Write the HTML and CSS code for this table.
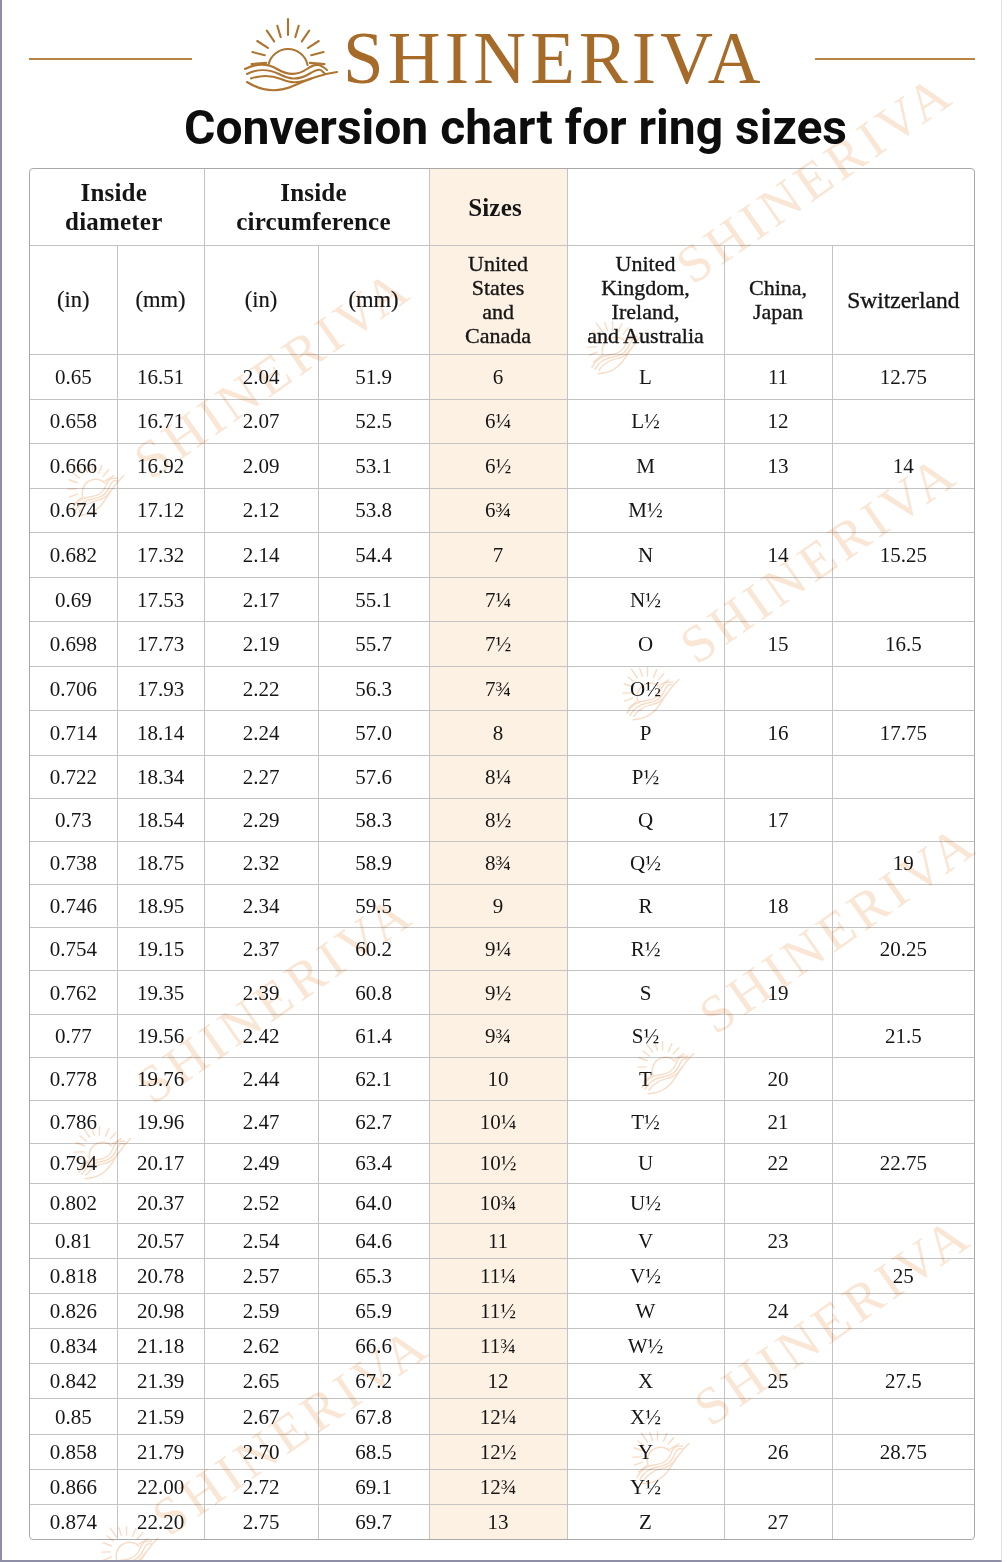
FILE: index.html
```html
<!DOCTYPE html>
<html lang="en">
<head>
<meta charset="utf-8">
<title>Shineriva – Conversion chart for ring sizes</title>
<link rel="stylesheet" href="styles.css">
</head>
<body>
<svg class="defs" width="0" height="0" aria-hidden="true">
  <symbol id="sun" viewBox="0 0 110 82">
    <g fill="none" stroke="currentColor" stroke-width="2.1" stroke-linecap="round" stroke-linejoin="round">
      <path d="M33.4 53 A20 20 0 0 1 72.6 53"/>
      <path d="M53 23 L53 7"/>
      <path d="M45.7 25.1 L42.3 13.8 M60.3 25.1 L63.7 13.8"/>
      <path d="M39.2 29.3 L31.8 18.7 M66.8 29.3 L74.2 18.7"/>
      <path d="M32.9 35.9 L22.2 29 M73.1 35.9 L83.8 29"/>
      <path d="M29.7 43.2 L17.4 40.1 M76.3 43.2 L88.6 40.1"/>
      <path d="M31.1 50.9 L16.6 52.1 M74.9 50.9 L89.4 52.1"/>
      <path d="M10 57 C20 52 32 51 42 57 S62 64 72 57 S86 53 92 58"/>
      <path d="M12 62 C22 57 34 57 44 62 S62 69 74 62 S86 58 90 62"/>
      <path d="M16 66.5 C26 63 36 63 46 67 S62 72 76 66.5"/>
      <path d="M12 70 C28 80 44 80 58 74 S86 62 102 60"/>
    </g>
  </symbol>
</svg>

<div class="page">
  <header class="brand">
    <span class="rule"></span>
    <div class="logo">
      <svg class="logo-icon" viewBox="0 0 110 82"><use href="#sun"/></svg>
      <span class="logo-text">SHINERIVA</span>
    </div>
    <span class="rule rule-right"></span>
  </header>

  <h1 class="title">Conversion chart for ring sizes</h1>

  <div class="chart">
    <table>
      <colgroup>
        <col class="c1"><col class="c2"><col class="c3"><col class="c4">
        <col class="c5"><col class="c6"><col class="c7"><col class="c8">
      </colgroup>
      <thead>
        <tr class="hr1">
          <th colspan="2">Inside<br>diameter</th>
          <th colspan="2">Inside<br>circumference</th>
          <th class="hl">Sizes</th>
          <th colspan="3"></th>
        </tr>
        <tr class="hr2">
          <th class="unit">(in)</th>
          <th class="unit">(mm)</th>
          <th class="unit">(in)</th>
          <th class="unit">(mm)</th>
          <th class="hl">United<br>States<br>and<br>Canada</th>
          <th>United<br>Kingdom,<br>Ireland,<br>and Australia</th>
          <th>China,<br>Japan</th>
          <th class="swiss">Switzerland</th>
        </tr>
      </thead>
      <tbody>
        <tr><td>0.65</td><td>16.51</td><td>2.04</td><td>51.9</td><td>6</td><td>L</td><td>11</td><td>12.75</td></tr>
        <tr><td>0.658</td><td>16.71</td><td>2.07</td><td>52.5</td><td>6¼</td><td>L½</td><td>12</td><td></td></tr>
        <tr><td>0.666</td><td>16.92</td><td>2.09</td><td>53.1</td><td>6½</td><td>M</td><td>13</td><td>14</td></tr>
        <tr><td>0.674</td><td>17.12</td><td>2.12</td><td>53.8</td><td>6¾</td><td>M½</td><td></td><td></td></tr>
        <tr><td>0.682</td><td>17.32</td><td>2.14</td><td>54.4</td><td>7</td><td>N</td><td>14</td><td>15.25</td></tr>
        <tr><td>0.69</td><td>17.53</td><td>2.17</td><td>55.1</td><td>7¼</td><td>N½</td><td></td><td></td></tr>
        <tr><td>0.698</td><td>17.73</td><td>2.19</td><td>55.7</td><td>7½</td><td>O</td><td>15</td><td>16.5</td></tr>
        <tr><td>0.706</td><td>17.93</td><td>2.22</td><td>56.3</td><td>7¾</td><td>O½</td><td></td><td></td></tr>
        <tr><td>0.714</td><td>18.14</td><td>2.24</td><td>57.0</td><td>8</td><td>P</td><td>16</td><td>17.75</td></tr>
        <tr><td>0.722</td><td>18.34</td><td>2.27</td><td>57.6</td><td>8¼</td><td>P½</td><td></td><td></td></tr>
        <tr><td>0.73</td><td>18.54</td><td>2.29</td><td>58.3</td><td>8½</td><td>Q</td><td>17</td><td></td></tr>
        <tr><td>0.738</td><td>18.75</td><td>2.32</td><td>58.9</td><td>8¾</td><td>Q½</td><td></td><td>19</td></tr>
        <tr><td>0.746</td><td>18.95</td><td>2.34</td><td>59.5</td><td>9</td><td>R</td><td>18</td><td></td></tr>
        <tr><td>0.754</td><td>19.15</td><td>2.37</td><td>60.2</td><td>9¼</td><td>R½</td><td></td><td>20.25</td></tr>
        <tr><td>0.762</td><td>19.35</td><td>2.39</td><td>60.8</td><td>9½</td><td>S</td><td>19</td><td></td></tr>
        <tr><td>0.77</td><td>19.56</td><td>2.42</td><td>61.4</td><td>9¾</td><td>S½</td><td></td><td>21.5</td></tr>
        <tr><td>0.778</td><td>19.76</td><td>2.44</td><td>62.1</td><td>10</td><td>T</td><td>20</td><td></td></tr>
        <tr><td>0.786</td><td>19.96</td><td>2.47</td><td>62.7</td><td>10¼</td><td>T½</td><td>21</td><td></td></tr>
        <tr><td>0.794</td><td>20.17</td><td>2.49</td><td>63.4</td><td>10½</td><td>U</td><td>22</td><td>22.75</td></tr>
        <tr><td>0.802</td><td>20.37</td><td>2.52</td><td>64.0</td><td>10¾</td><td>U½</td><td></td><td></td></tr>
        <tr><td>0.81</td><td>20.57</td><td>2.54</td><td>64.6</td><td>11</td><td>V</td><td>23</td><td></td></tr>
        <tr><td>0.818</td><td>20.78</td><td>2.57</td><td>65.3</td><td>11¼</td><td>V½</td><td></td><td>25</td></tr>
        <tr><td>0.826</td><td>20.98</td><td>2.59</td><td>65.9</td><td>11½</td><td>W</td><td>24</td><td></td></tr>
        <tr><td>0.834</td><td>21.18</td><td>2.62</td><td>66.6</td><td>11¾</td><td>W½</td><td></td><td></td></tr>
        <tr><td>0.842</td><td>21.39</td><td>2.65</td><td>67.2</td><td>12</td><td>X</td><td>25</td><td>27.5</td></tr>
        <tr><td>0.85</td><td>21.59</td><td>2.67</td><td>67.8</td><td>12¼</td><td>X½</td><td></td><td></td></tr>
        <tr><td>0.858</td><td>21.79</td><td>2.70</td><td>68.5</td><td>12½</td><td>Y</td><td>26</td><td>28.75</td></tr>
        <tr><td>0.866</td><td>22.00</td><td>2.72</td><td>69.1</td><td>12¾</td><td>Y½</td><td></td><td></td></tr>
        <tr><td>0.874</td><td>22.20</td><td>2.75</td><td>69.7</td><td>13</td><td>Z</td><td>27</td><td></td></tr>
      </tbody>
    </table>
  </div>

  <div class="watermarks" aria-hidden="true">
    <span class="wm-text wm-a">SHINERIVA</span>
    <span class="wm-text wm-b">SHINERIVA</span>
    <span class="wm-text wm-c">SHINERIVA</span>
    <span class="wm-text wm-d">SHINERIVA</span>
    <span class="wm-text wm-e">SHINERIVA</span>
    <span class="wm-text wm-f">SHINERIVA</span>
    <span class="wm-text wm-g">SHINERIVA</span>
    <svg class="wm-icon wi-a" viewBox="6 4 98 76"><use href="#sun"/></svg>
    <svg class="wm-icon wi-b" viewBox="6 4 98 76"><use href="#sun"/></svg>
    <svg class="wm-icon wi-c" viewBox="6 4 98 76"><use href="#sun"/></svg>
    <svg class="wm-icon wi-d" viewBox="6 4 98 76"><use href="#sun"/></svg>
    <svg class="wm-icon wi-e" viewBox="6 4 98 76"><use href="#sun"/></svg>
    <svg class="wm-icon wi-f" viewBox="6 4 98 76"><use href="#sun"/></svg>
    <svg class="wm-icon wi-g" viewBox="6 4 98 76"><use href="#sun"/></svg>
  </div>
</div>
</body>
</html>
```

FILE: styles.css
```css
html, body {
  margin: 0;
  padding: 0;
  background: #ffffff;
}

.defs {
  position: absolute;
  width: 0;
  height: 0;
  overflow: hidden;
}

.page {
  position: relative;
  width: 1002px;
  height: 1562px;
  box-sizing: border-box;
  border-left: 2px solid #8e8ea6;
  border-bottom: 2px solid #8e8ea6;
  border-right: 1px solid #e2e2e2;
  overflow: hidden;
  font-family: "Liberation Serif", "Times New Roman", serif;
  color: #151515;
  background: #ffffff;
}

/* ---------- brand ---------- */
.brand {
  display: flex;
  align-items: flex-start;
  width: 946px;
  height: 101px;
  box-sizing: border-box;
  margin-left: 27px;
  padding-top: 12px;
}

.rule {
  width: 163px;
  height: 2px;
  background: #b8843f;
  margin-top: 46px;
}

.rule-right {
  width: 160px;
  margin-left: auto;
}

.logo {
  display: flex;
  align-items: flex-start;
  margin-left: 43px;
}

.logo-icon {
  width: 110px;
  height: 82px;
  color: #ae7532;
}

.logo-text {
  font-family: "Liberation Serif", "Times New Roman", serif;
  font-size: 73px;
  line-height: 73px;
  letter-spacing: 4.2px;
  margin-top: 10px;
  margin-left: -2px;
  color: #a66a29;
}

/* ---------- title ---------- */
.title {
  margin: 1px 0 0;
  padding-left: 28px;
  font-family: Roboto, "Liberation Sans", sans-serif;
  font-weight: 700;
  font-size: 48px;
  line-height: 52px;
  text-align: center;
  color: #0d0d0d;
}

/* ---------- table ---------- */
.chart {
  margin: 14px 0 0 27px;
  width: 946px;
  box-sizing: border-box;
  border: 1px solid #a9a9a9;
  border-radius: 4px;
  overflow: hidden;
}

.chart table {
  width: 944px;
  border-collapse: collapse;
  border-style: hidden;
  table-layout: fixed;
}

.c1 { width: 87px; }
.c2 { width: 87px; }
.c3 { width: 114px; }
.c4 { width: 111px; }
.c5 { width: 138px; }
.c6 { width: 157px; }
.c7 { width: 108px; }
.c8 { width: 142px; }

.chart th,
.chart td {
  border: 1px solid #c3c3c3;
  padding: 0;
  text-align: center;
  vertical-align: middle;
}

.chart td {
  font-size: 21px;
  line-height: 24px;
  color: #161616;
}

.hr1 th {
  height: 76px;
  font-size: 25px;
  line-height: 29px;
  font-weight: 700;
  letter-spacing: 0.2px;
  padding-right: 6px;
}

.hr2 th {
  height: 108px;
  font-size: 22px;
  line-height: 24px;
  font-weight: 400;
  -webkit-text-stroke: 0.35px #151515;
}

.hr2 th.unit {
  font-size: 22.5px;
  -webkit-text-stroke: 0.2px #151515;
}

.hr2 th.swiss {
  font-size: 23.5px;
}

.hl,
.chart tbody td:nth-child(5) {
  background: #fdf1e3;
}

.chart tbody tr:nth-child(-n+9) td { height: 43.56px; }
.chart tbody tr:nth-child(n+10):nth-child(-n+18) td { height: 42.11px; }
.chart tbody tr:nth-child(19) td,
.chart tbody tr:nth-child(20) td { height: 39px; }
.chart tbody tr:nth-child(n+21) td { height: 34.11px; }

/* ---------- watermark ---------- */
.watermarks {
  position: absolute;
  inset: 0;
  pointer-events: none;
  mix-blend-mode: multiply;
}

.wm-text {
  position: absolute;
  font-family: "Liberation Serif", "Times New Roman", serif;
  font-size: 53px;
  line-height: 52px;
  letter-spacing: 5px;
  white-space: nowrap;
  color: #fae6d5;
  transform-origin: 0 43px;
  transform: rotate(-35deg);
}

.wm-a { left: 690px; top: 242px; }
.wm-b { left: 148px; top: 437px; }
.wm-c { left: 694px; top: 622px; }
.wm-d { left: 150px; top: 1062px; }
.wm-e { left: 713px; top: 992px; }
.wm-f { left: 708px; top: 1384px; }
.wm-g { left: 166px; top: 1494px; }

.wm-icon {
  position: absolute;
  width: 74px;
  height: 58px;
  color: #f8dcc6;
  transform: rotate(-35deg);
}

.wi-a { left: 577px; top: 312px; }
.wi-b { left: 57px; top: 454px; }
.wi-c { left: 612px; top: 658px; }
.wi-d { left: 64px; top: 1117px; }
.wi-e { left: 627px; top: 1032px; }
.wi-f { left: 622px; top: 1422px; }
.wi-g { left: 91px; top: 1517px; }
```
